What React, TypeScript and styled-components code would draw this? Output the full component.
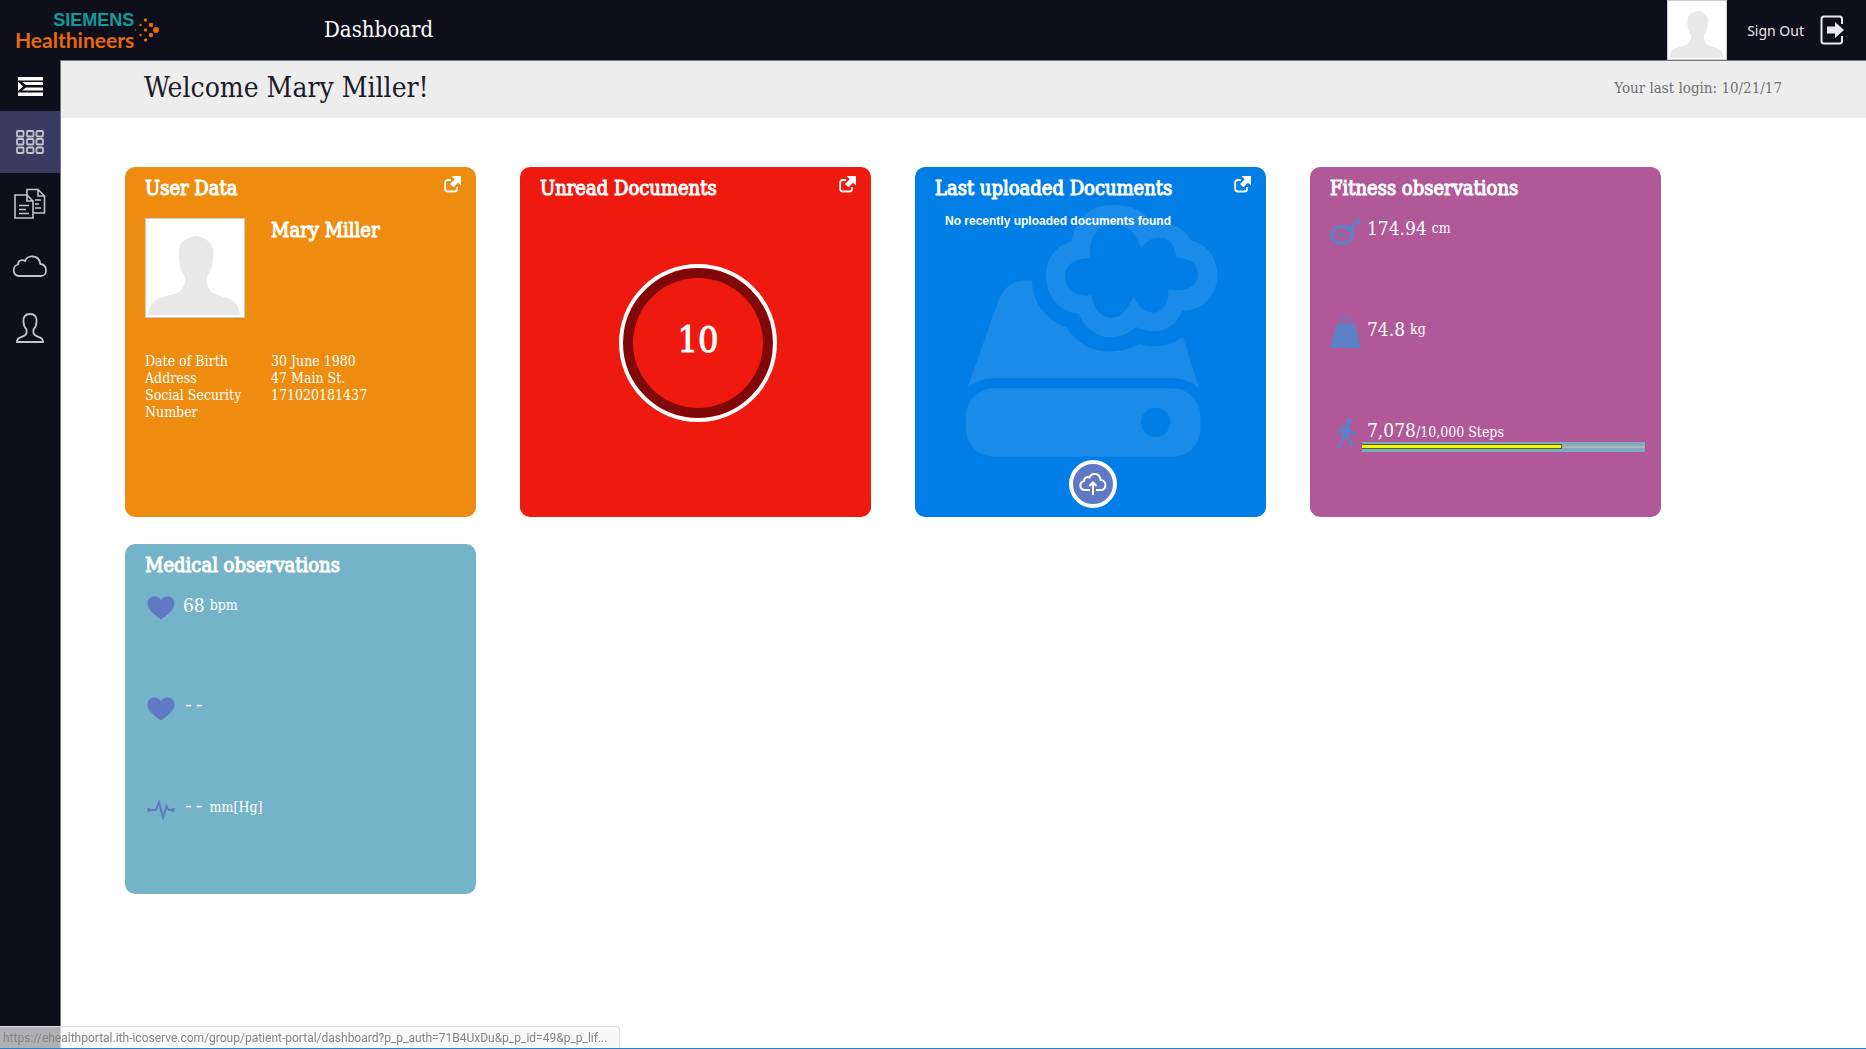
import React from "react";
import styled, { createGlobalStyle } from "styled-components";

const serif = `"DejaVu Serif Condensed", "DejaVu Serif", "Liberation Serif", serif`;
const sans = `"Noto Sans", "Open Sans", sans-serif`;

const GlobalStyle = createGlobalStyle`
  *, *::before, *::after { box-sizing: border-box; }
  body { margin: 0; background: #fff; font-family: ${serif}; }
  h1, h2, h3, p, dl, dd, ul { margin: 0; padding: 0; }
  a { color: inherit; text-decoration: none; }
  svg { display: block; }
`;

const Page = styled.div`
  min-height: 100vh;
  display: flex;
  flex-direction: column;
`;

const Header = styled.header`
  height: 60px;
  display: flex;
  align-items: center;
  background: #0f0e1b;
  color: #fff;
`;

const Brand = styled.a`
  width: 324px;
  padding-left: 15px;
  display: flex;
  align-items: center;
`;

const BrandText = styled.span`
  display: flex;
  flex-direction: column;
  align-items: flex-end;
`;

const BrandTop = styled.span`
  font-family: "Liberation Sans", Arial, sans-serif;
  font-size: 18px;
  line-height: 20px;
  font-weight: 700;
  color: #13999a;
`;

const BrandBottom = styled.span`
  font-family: Lato, sans-serif;
  font-size: 21px;
  line-height: 20px;
  font-weight: 700;
  color: #e66a0a;
`;

const PageTitle = styled.span`
  flex: 1;
  font-size: 22px;
  line-height: 24px;
`;

const HeaderAvatar = styled.a`
  width: 60px;
  height: 60px;
  border: 1px solid #ccc;
  background: #fff;
`;

const SignOut = styled.button`
  height: 60px;
  padding: 0 22px 0 20px;
  display: flex;
  align-items: center;
  gap: 16px;
  border: 0;
  background: none;
  color: #e8e8ec;
  font-family: ${sans};
  font-size: 14px;
  cursor: pointer;
`;

const Body = styled.div`
  flex: 1;
  display: flex;
`;

const Sidebar = styled.nav`
  width: 61px;
  flex: none;
  background: #0f0e1b;
  border-right: 1px solid #77767f;
`;

const NavList = styled.ul`
  list-style: none;
`;

const MenuToggle = styled.button`
  width: 60px;
  height: 51px;
  padding: 1px 0 0;
  display: flex;
  align-items: center;
  justify-content: center;
  border: 0;
  background: none;
  color: #fff;
`;

const NavLink = styled.a<{ $active?: boolean }>`
  height: 62px;
  display: flex;
  align-items: center;
  justify-content: center;
  color: #c3c3cc;
  background: ${(p) => (p.$active ? "#3b3a60" : "transparent")};
`;

const Main = styled.main`
  flex: 1;
  min-width: 0;
`;

const WelcomeBar = styled.div`
  height: 58px;
  padding: 0 84px 3px 83px;
  display: flex;
  align-items: center;
  justify-content: space-between;
  background: #ededed;
  border-top: 1px solid #77767f;
`;

const Welcome = styled.h1`
  font-size: 28px;
  line-height: 32px;
  font-weight: 400;
  color: #1b1a2b;
`;

const LastLogin = styled.p`
  font-size: 15px;
  line-height: 20px;
  color: #707070;
`;

const Tiles = styled.div`
  padding: 49px 64px 27px;
  display: flex;
  flex-wrap: wrap;
  gap: 27px 44px;
`;

const Tile = styled.section<{ $color: string }>`
  position: relative;
  width: 351px;
  height: 350px;
  padding: 8px 14px 9px 20px;
  border-radius: 10px;
  background: ${(p) => p.$color};
  color: #fff;
  display: flex;
  flex-direction: column;
`;

const TileHead = styled.div`
  display: flex;
  justify-content: space-between;
  align-items: flex-start;
  height: 36px;
  flex: none;
`;

const TileTitle = styled.h2`
  font-size: 20px;
  line-height: 27px;
  font-weight: 400;
  -webkit-text-stroke: 1px #fff;
`;

const OpenLink = styled.a`
  margin-top: 1px;
`;

const Person = styled.div`
  padding-top: 7px;
  display: grid;
  grid-template-columns: 126px 1fr;
`;

const Photo = styled.div`
  width: 100px;
  height: 100px;
  border: 1px solid #ccc;
  background: #fff;
`;

const PersonName = styled.h3`
  font-size: 20px;
  line-height: 24px;
  font-weight: 400;
  -webkit-text-stroke: 1px #fff;
`;

const Facts = styled.dl`
  && { margin-top: 35px; }
  display: grid;
  grid-template-columns: 100px 1fr;
  column-gap: 26px;
  font-size: 14px;
  line-height: 17px;
`;

const Ring = styled.a`
  width: 158px;
  height: 158px;
  margin: 53px 0 0 79px;
  padding-bottom: 8px;
  border: 4px solid #fff;
  border-radius: 50%;
  background: #ee1a0f;
  box-shadow: inset 0 0 0 10px #800808;
  display: flex;
  align-items: center;
  justify-content: center;
  font-size: 36px;
  -webkit-text-stroke: 1px #fff;
`;

const DriveArt = styled.svg`
  position: absolute;
  left: 50px;
  top: 37px;
`;

const EmptyNote = styled.p`
  position: relative;
  padding-left: 10px;
  font-family: "Liberation Sans", Arial, sans-serif;
  font-size: 12px;
  line-height: 20px;
  font-weight: 700;
`;

const UploadButton = styled.button`
  width: 48px;
  height: 48px;
  margin: auto 0 0 134px;
  padding: 0;
  border: 4px solid #fff;
  border-radius: 50%;
  background: #6079c4;
  color: #fff;
  display: flex;
  align-items: center;
  justify-content: center;
`;

const Readings = styled.ul`
  && { padding-top: 5px; }
  list-style: none;
`;

const Reading = styled.li<{ $gap: number }>`
  height: 101px;
  display: grid;
  grid-template-columns: 32px 1fr;
  column-gap: ${(p) => p.$gap}px;
  align-content: start;
`;

const ReadingIcon = styled.span`
  height: 30px;
  display: flex;
  align-items: center;
  justify-content: center;
`;

const ReadingText = styled.p`
  display: flex;
  align-items: center;
  gap: 5px;
  height: 24px;
`;

const Value = styled.span`
  font-size: 19px;
  line-height: 24px;
`;

const NoValue = styled.span`
  font-family: "Liberation Mono", monospace;
  font-size: 18px;
  line-height: 24px;
`;

const Unit = styled.span`
  font-size: 14px;
  line-height: 20px;
`;

const StepsCell = styled.div`
  display: flex;
  flex-direction: column;
`;

const StepsBar = styled.progress`
  appearance: none;
  width: 283px;
  height: 10px;
  margin-left: -5px;
  border: 0;
  display: block;
  &::-webkit-progress-bar {
    padding: 2px 0 3px;
    background: linear-gradient(#7fabc0 4px, #b5b0b8 4px 6px, #7fabc0 6px);
  }
  &::-webkit-progress-value {
    background: #f4f808;
    border: 1px solid #4b6a10;
    border-left: 0;
  }
`;

const StatusBubble = styled.div`
  position: fixed;
  left: 0;
  bottom: 1px;
  height: 22px;
  padding: 1px 12px 0 3px;
  border: 1px solid #ddd;
  border-width: 1px 1px 0 0;
  border-radius: 0 4px 0 0;
  background: rgba(246, 246, 246, 0.7);
  color: #858585;
  font-family: Roboto, "Open Sans", sans-serif;
  font-size: 12px;
  line-height: 20px;
  white-space: nowrap;
`;

const BottomEdge = styled.div`
  position: fixed;
  left: 0;
  right: 0;
  bottom: 0;
  height: 1px;
  background: #2a80c4;
`;

const Silhouette = () => (
  <svg width="100%" height="100%" viewBox="0 0 100 100" fill="#e8e8e8" aria-hidden="true">
    <path d="M50 17C61 18 69 25 69 34C69 38 68 40 68 42C68 49 65 54 62 59C61 66 63 70 67 75C76 79 84 80 90 84C94 88 95 93 96 98H2C3 92 5 87 8 84C15 79 25 78 33 75C38 71 41 66 40 60C37 55 34 50 34 43C33 36 33 31 35 26C38 21 45 19 50 17Z" />
  </svg>
);

const BrandDots = () => (
  <svg width="26" height="28" viewBox="0 0 26 28" fill="#e66a0a" aria-hidden="true">
    <circle cx="22" cy="14" r="3" />
    <circle cx="17" cy="9" r="2.2" />
    <circle cx="17" cy="19" r="2.2" />
    <circle cx="11.500" cy="4" r="1.700" />
    <circle cx="11.500" cy="14" r="1.700" />
    <circle cx="11.500" cy="24" r="1.700" />
    <circle cx="6.500" cy="9" r="1.200" />
    <circle cx="6.500" cy="19" r="1.200" />
    <circle cx="1.500" cy="14" r="0.800" />
  </svg>
);

const SignOutIcon = () => (
  <svg width="24" height="30" viewBox="0 0 24 30" aria-hidden="true">
    <path d="M22 9V4Q22 1.500 19.500 1.500H4Q1.500 1.500 1.500 4V26Q1.500 28.500 4 28.500H19.500Q22 28.500 22 26V21" fill="none" stroke="currentColor" strokeWidth="2" />
    <path d="M7 11.500H15V7L24 15L15 23V18.500H7Z" fill="currentColor" />
  </svg>
);

const MenuIcon = () => (
  <svg width="25" height="19" viewBox="0 0 25 19" fill="currentColor" aria-hidden="true">
    <path d="M0 0H25V3.500H0ZM4 5H25V8H8ZM8 10.500H25V13.500H4ZM0 15.500H25V19H0ZM0 4.500L5 9.500L0 14Z" />
  </svg>
);

const GridIcon = () => (
  <svg width="28" height="24" viewBox="0 0 28 24" fill="none" stroke="currentColor" strokeWidth="1.800" aria-hidden="true">
    {[1, 9, 17.5].map((y) =>
      [1, 11, 20.5].map((x) => <rect key={`${x}-${y}`} x={x} y={y} width="6.500" height="5.500" rx="1" />)
    )}
  </svg>
);

const DocsIcon = () => (
  <svg width="32" height="32" viewBox="0 0 32 32" fill="none" stroke="currentColor" strokeWidth="1.600" aria-hidden="true">
    <path d="M1 7H13L19 13V30H1ZM13 7V13H19" />
    <path d="M5 17.500H15M5 21.500H12M5 25.500H15" />
    <path d="M13 7V1.500H24L30.500 8V25H19M24 1.500V8H30.500M21 12H27M21 16H25M21 20H27" />
  </svg>
);

const CloudIcon = () => (
  <svg width="34" height="22" viewBox="0 0 34 22" fill="none" stroke="currentColor" strokeWidth="1.800" aria-hidden="true">
    <path d="M7 21C-1 21-1 11 5 9.500C5 5.500 9 4 12 6C14 0 26-1 27.500 9C35 10 34.500 21 28 21Z" />
  </svg>
);

const PersonIcon = () => (
  <svg width="28" height="30" viewBox="0 0 28 30" fill="none" stroke="currentColor" strokeWidth="1.800" aria-hidden="true">
    <path d="M14 1C9 1 7 4 7.500 8.500C7.500 12 8.500 14.500 10.500 16.500C11.500 22 9 22.500 4 24.500C1.500 25.500 1 27 1 29H27C27 27 26.500 25.500 24 24.500C19 22.500 16.500 22 17.500 16.500C19.500 14.500 20.500 12 20.500 8.500C21 4 19 1 14 1Z" />
  </svg>
);

const OpenIcon = () => (
  <svg width="18" height="18" viewBox="0 0 18 18" aria-hidden="true">
    <path d="M7 4H4Q1.200 4 1.200 6.500V13Q1.200 15.500 4 15.500H10.500Q13 15.500 13 13V11" fill="none" stroke="#fff" strokeWidth="1.800" />
    <path d="M7.500 0H17V9.500L14 6.700L9.500 11.200L6 8L10.700 3.300Z" fill="#fff" />
  </svg>
);

const CloudUploadIcon = () => (
  <svg width="28" height="24" viewBox="0 0 28 24" fill="none" stroke="currentColor" strokeWidth="2" aria-hidden="true">
    <path d="M11 18H6C0 18 0 10 5 9C5 6 8 4 10.500 5.500C12.500 0 21 1 21.500 8C28 8 28 18 22 18H17" />
    <path d="M14 23V11M10.500 14L14 10.500L17.500 14" />
  </svg>
);

const HeartIcon = () => (
  <svg width="28" height="24" viewBox="0 0 28 24" fill="#6079c4" aria-hidden="true">
    <path d="M14 23.500C9 20 0.500 14 0.500 7.500C0.500 0 10-2 14 4C18-2 27.500 0 27.500 7.500C27.500 14 19 20 14 23.500Z" />
  </svg>
);

const PulseIcon = () => (
  <svg width="28" height="20" viewBox="0 0 28 20" fill="none" stroke="#6079c4" strokeWidth="2" aria-hidden="true">
    <path d="M1 10H9L12 2L16 18L19.500 6L21.500 10H27" />
    <circle cx="2" cy="10" r="1" />
    <circle cx="26" cy="10" r="1" />
  </svg>
);

const TapeIcon = () => (
  <svg width="32" height="32" viewBox="0 0 32 32" fill="none" stroke="#5b80c5" aria-hidden="true">
    <ellipse cx="12" cy="20" rx="10" ry="8.500" strokeWidth="3.500" />
    <path d="M15 11.500H24L21 20" strokeWidth="2.500" />
    <path d="M8 20H16M9 18L15 22M12 17V22" strokeWidth="1" />
    <path d="M25 7L29 3M26 9L30 6" strokeWidth="3" />
  </svg>
);

const WeightIcon = () => (
  <svg width="32" height="34" viewBox="0 0 32 34" aria-hidden="true">
    <path d="M7 9H25L31 33H0Z" fill="#5b80c5" />
    <circle cx="16" cy="6" r="4.500" fill="none" stroke="#5b80c5" strokeWidth="2" />
  </svg>
);

const WalkIcon = () => (
  <svg width="22" height="32" viewBox="0 0 22 32" fill="none" stroke="#5b80c5" strokeWidth="2.500" aria-hidden="true">
    <circle cx="14" cy="4" r="3" fill="#5b80c5" stroke="none" />
    <path d="M9 9L13 9L13 20H8Z" fill="#5b80c5" />
    <path d="M9 10L4 13L2 18M13 10L16 15L21 17M9 20L7 25L3 31M12 20L16 25L17 31" />
  </svg>
);

const DriveIcon = () => (
  <DriveArt width="254" height="254" viewBox="180 130 762 762" fill="#1a8be9" aria-hidden="true">
    <path fillRule="evenodd" d="M265 683H804A82 82 0 0 1 886 765V806A82 82 0 0 1 804 888H265A82 82 0 0 1 183 806V765A82 82 0 0 1 265 683ZM752 741A44 44 0 1 0 752 829A44 44 0 1 0 752 741Z" />
    <path d="M187 682L275 435C292 382 320 354 381 360C382 425 425 480 484 499C530 570 610 595 703 551C750 565 800 555 834 529L882 682C855 660 830 653 800 653H265C235 653 210 663 187 682Z" />
    <path fillRule="evenodd" d="M500 243C508 170 560 132 625 133C680 133 715 152 735 180C790 178 835 200 859 240C905 250 938 290 937 345C935 410 890 450 832 450C812 503 755 530 693 499C630 555 550 530 521 459C465 455 422 405 423 343C424 290 455 252 500 243ZM555 293C515 290 480 310 480 349C480 390 515 410 560 404C565 445 585 471 620 471C655 470 670 440 685 407C700 435 715 456 747 456C780 452 792 420 790 386C840 395 879 380 879 340C877 305 850 290 814 291C810 255 795 231 765 231C735 231 720 245 708 262C695 225 675 192 625 190C570 195 550 240 555 293Z" />
  </DriveArt>
);

const OpenTile = ({ label }: { label: string }) => (
  <OpenLink href="#" aria-label={label}>
    <OpenIcon />
  </OpenLink>
);

const navItems = [
  { label: "Dashboard", icon: <GridIcon />, active: true },
  { label: "Documents", icon: <DocsIcon /> },
  { label: "Upload", icon: <CloudIcon /> },
  { label: "Profile", icon: <PersonIcon /> },
];

const facts = [
  ["Date of Birth", "30 June 1980"],
  ["Address", "47 Main St."],
  ["Social Security Number", "171020181437"],
];

export default function App() {
  return (
    <Page>
      <GlobalStyle />
      <Header>
        <Brand href="#">
          <BrandText>
            <BrandTop>SIEMENS</BrandTop>
            <BrandBottom>Healthineers</BrandBottom>
          </BrandText>
          <BrandDots />
        </Brand>
        <PageTitle>Dashboard</PageTitle>
        <HeaderAvatar href="#" aria-label="Profile">
          <Silhouette />
        </HeaderAvatar>
        <SignOut type="button">
          Sign Out
          <SignOutIcon />
        </SignOut>
      </Header>
      <Body>
        <Sidebar>
          <MenuToggle type="button" aria-label="Toggle menu">
            <MenuIcon />
          </MenuToggle>
          <NavList>
            {navItems.map((item) => (
              <li key={item.label}>
                <NavLink href="#" aria-label={item.label} $active={item.active}>
                  {item.icon}
                </NavLink>
              </li>
            ))}
          </NavList>
        </Sidebar>
        <Main>
          <WelcomeBar>
            <Welcome>Welcome Mary Miller!</Welcome>
            <LastLogin>Your last login: 10/21/17</LastLogin>
          </WelcomeBar>
          <Tiles>
            <Tile $color="#ee8c0f">
              <TileHead>
                <TileTitle>User Data</TileTitle>
                <OpenTile label="Open user data" />
              </TileHead>
              <Person>
                <Photo>
                  <Silhouette />
                </Photo>
                <PersonName>Mary Miller</PersonName>
              </Person>
              <Facts>
                {facts.map(([term, value]) => (
                  <React.Fragment key={term}>
                    <dt>{term}</dt>
                    <dd>{value}</dd>
                  </React.Fragment>
                ))}
              </Facts>
            </Tile>
            <Tile $color="#ee1a0f">
              <TileHead>
                <TileTitle>Unread Documents</TileTitle>
                <OpenTile label="Open unread documents" />
              </TileHead>
              <Ring href="#">10</Ring>
            </Tile>
            <Tile $color="#007ee6">
              <DriveIcon />
              <TileHead>
                <TileTitle>Last uploaded Documents</TileTitle>
                <OpenTile label="Open last uploaded documents" />
              </TileHead>
              <EmptyNote>No recently uploaded documents found</EmptyNote>
              <UploadButton type="button" aria-label="Upload document">
                <CloudUploadIcon />
              </UploadButton>
            </Tile>
            <Tile $color="#b05898">
              <TileHead>
                <TileTitle>Fitness observations</TileTitle>
              </TileHead>
              <Readings>
                <Reading $gap={5}>
                  <ReadingIcon><TapeIcon /></ReadingIcon>
                  <ReadingText><Value>174.94</Value><Unit>cm</Unit></ReadingText>
                </Reading>
                <Reading $gap={5}>
                  <ReadingIcon><WeightIcon /></ReadingIcon>
                  <ReadingText><Value>74.8</Value><Unit>kg</Unit></ReadingText>
                </Reading>
                <Reading $gap={5}>
                  <ReadingIcon><WalkIcon /></ReadingIcon>
                  <StepsCell>
                    <ReadingText><span><Value>7,078</Value><Unit>/10,000 Steps</Unit></span></ReadingText>
                    <StepsBar value={7078} max={10000} aria-label="Steps" />
                  </StepsCell>
                </Reading>
              </Readings>
            </Tile>
            <Tile $color="#75b3c9">
              <TileHead>
                <TileTitle>Medical observations</TileTitle>
              </TileHead>
              <Readings>
                <Reading $gap={6}>
                  <ReadingIcon><HeartIcon /></ReadingIcon>
                  <ReadingText><Value>68</Value><Unit>bpm</Unit></ReadingText>
                </Reading>
                <Reading $gap={6}>
                  <ReadingIcon><HeartIcon /></ReadingIcon>
                  <ReadingText><NoValue>--</NoValue></ReadingText>
                </Reading>
                <Reading $gap={6}>
                  <ReadingIcon><PulseIcon /></ReadingIcon>
                  <ReadingText><NoValue>--</NoValue><Unit>mm[Hg]</Unit></ReadingText>
                </Reading>
              </Readings>
            </Tile>
          </Tiles>
        </Main>
      </Body>
      <StatusBubble>
        https://ehealthportal.ith-icoserve.com/group/patient-portal/dashboard?p_p_auth=71B4UxDu&p_p_id=49&p_p_lif...
      </StatusBubble>
      <BottomEdge />
    </Page>
  );
}
